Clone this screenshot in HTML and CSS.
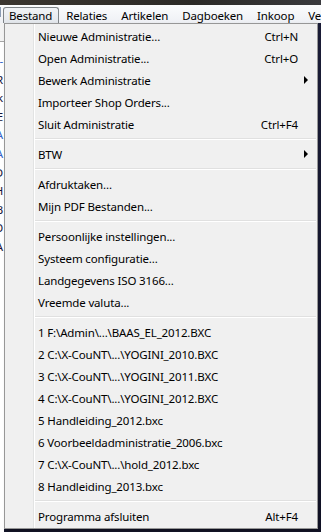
FILE: index.html
```html
<!DOCTYPE html>
<html lang="nl">
<head>
  <meta charset="UTF-8" />
  <meta name="viewport" content="width=device-width, initial-scale=1.0" />
  <title>Bestand menu</title>
  <link rel="stylesheet" href="styles.css">
</head>
<body>
  <div class="titlebar"></div>
  <div class="menubar">
    <span class="mb-icon"></span>
    <span class="mb-item open">Bestand</span>
    <span class="mb-item">Relaties</span>
    <span class="mb-item">Artikelen</span>
    <span class="mb-item">Dagboeken</span>
    <span class="mb-item">Inkoop</span>
    <span class="mb-item">Verkoop</span>
  </div>
  <div class="stage">
    <div class="behind">
      <div class="behind-head"></div>
      <div class="row blue">-</div>
      <div class="row">R</div>
      <div class="row">k</div>
      <div class="row">E</div>
      <div class="row blue">A</div>
      <div class="row blue">A</div>
      <div class="row">D</div>
      <div class="row">H</div>
      <div class="row">B</div>
      <div class="row">O</div>
      <div class="row">A</div>
    </div>
    <div class="dropdown">
      <div class="item"><span class="label">Nieuwe Administratie...</span><span class="key">Ctrl+N</span></div>
      <div class="item"><span class="label">Open Administratie...</span><span class="key">Ctrl+O</span></div>
      <div class="item sub"><span class="label">Bewerk Administratie</span><span class="arrow"></span></div>
      <div class="item"><span class="label">Importeer Shop Orders...</span></div>
      <div class="item"><span class="label">Sluit Administratie</span><span class="key">Ctrl+F4</span></div>
      <div class="sep"></div>
      <div class="item sub"><span class="label">BTW</span><span class="arrow"></span></div>
      <div class="sep"></div>
      <div class="item"><span class="label">Afdruktaken...</span></div>
      <div class="item"><span class="label">Mijn PDF Bestanden...</span></div>
      <div class="sep"></div>
      <div class="item"><span class="label">Persoonlijke instellingen...</span></div>
      <div class="item"><span class="label">Systeem configuratie...</span></div>
      <div class="item"><span class="label">Landgegevens ISO 3166...</span></div>
      <div class="item"><span class="label">Vreemde valuta...</span></div>
      <div class="sep"></div>
      <div class="item"><span class="label">1 F:\Admin\...\BAAS_EL_2012.BXC</span></div>
      <div class="item"><span class="label">2 C:\X-CouNT\...\YOGINI_2010.BXC</span></div>
      <div class="item"><span class="label">3 C:\X-CouNT\...\YOGINI_2011.BXC</span></div>
      <div class="item"><span class="label">4 C:\X-CouNT\...\YOGINI_2012.BXC</span></div>
      <div class="item"><span class="label">5 Handleiding_2012.bxc</span></div>
      <div class="item"><span class="label">6 Voorbeeldadministratie_2006.bxc</span></div>
      <div class="item"><span class="label">7 C:\X-CouNT\...\hold_2012.bxc</span></div>
      <div class="item"><span class="label">8 Handleiding_2013.bxc</span></div>
      <div class="sep"></div>
      <div class="item"><span class="label">Programma afsluiten</span><span class="key">Alt+F4</span></div>
    </div>
    <div class="backdrop"></div>
  </div>
</body>
</html>
```

FILE: styles.css
```css
body {
  margin: 0;
  font-family: 'Noto Sans', 'Open Sans', sans-serif;
  font-size: 11.5px;
  letter-spacing: -0.15px;
  color: #000;
  background: #15162b;
  width: 321px;
  height: 532px;
  overflow: hidden;
}
.titlebar {
  height: 5px;
  background: linear-gradient(to right, #3b3630, #2c2a27 60%, #3a3a3e);
}
.menubar {
  height: 18px;
  display: flex;
  align-items: stretch;
  gap: 1px;
  background: linear-gradient(#fbfcfd, #eef0f4);
  white-space: nowrap;
  overflow: hidden;
}
.mb-icon {
  width: 3px;
  margin: 2px 1px 6px 0;
  border: 1px solid #8a9bb3;
  border-left: none;
  background: #dfe6ef;
}
.mb-item {
  display: flex;
  align-items: center;
  padding: 0 6px 1px 5px;
  margin-top: 2px;
  border: 1px solid transparent;
  border-bottom: none;
}
.mb-item.open {
  border-color: #7f8488;
  border-radius: 3px 3px 0 0;
  background: linear-gradient(#f1f3f6, #e2e6eb);
}
.stage {
  display: flex;
  align-items: flex-start;
  height: 509px;
}
.behind {
  width: 4px;
  height: 509px;
  flex: none;
  overflow: hidden;
  background: #fff;
  color: #14143a;
}
.behind-head {
  height: 18px;
  background: #f3f3f3;
  border-bottom: 1px solid #a6a6a6;
  margin-bottom: 10px;
}
.behind .row {
  width: 12px;
  height: 18.6px;
  line-height: 18.6px;
  margin-left: -9px;
  text-align: right;
}
.behind .row.blue {
  color: #2f62c8;
}
.dropdown {
  width: 314px;
  flex: none;
  box-sizing: border-box;
  border: 1px solid #979797;
  padding: 1px 0;
  background: linear-gradient(to right, transparent 28px, #e2e3e3 28px, #e2e3e3 29px, #fff 29px, #fff 30px, transparent 30px), #f0f0f0;
  box-shadow: 2px 2px 3px rgba(0, 0, 0, 0.35);
}
.item {
  height: 22px;
  display: flex;
  align-items: center;
  padding: 0 19px 0 33px;
  white-space: nowrap;
}
.item .label {
  flex: 1;
}
.item.sub {
  padding-right: 9px;
}
.arrow {
  width: 0;
  height: 0;
  border-left: 4px solid #000;
  border-top: 4px solid transparent;
  border-bottom: 4px solid transparent;
}
.sep {
  height: 8px;
  margin: 0 1px 0 30px;
  background: linear-gradient(transparent 3px, #e0e0e0 3px, #e0e0e0 4px, #fff 4px, #fff 5px, transparent 5px);
}
.backdrop {
  flex: 1;
  height: 509px;
  background: linear-gradient(#1a1c36, #101124);
}
```
